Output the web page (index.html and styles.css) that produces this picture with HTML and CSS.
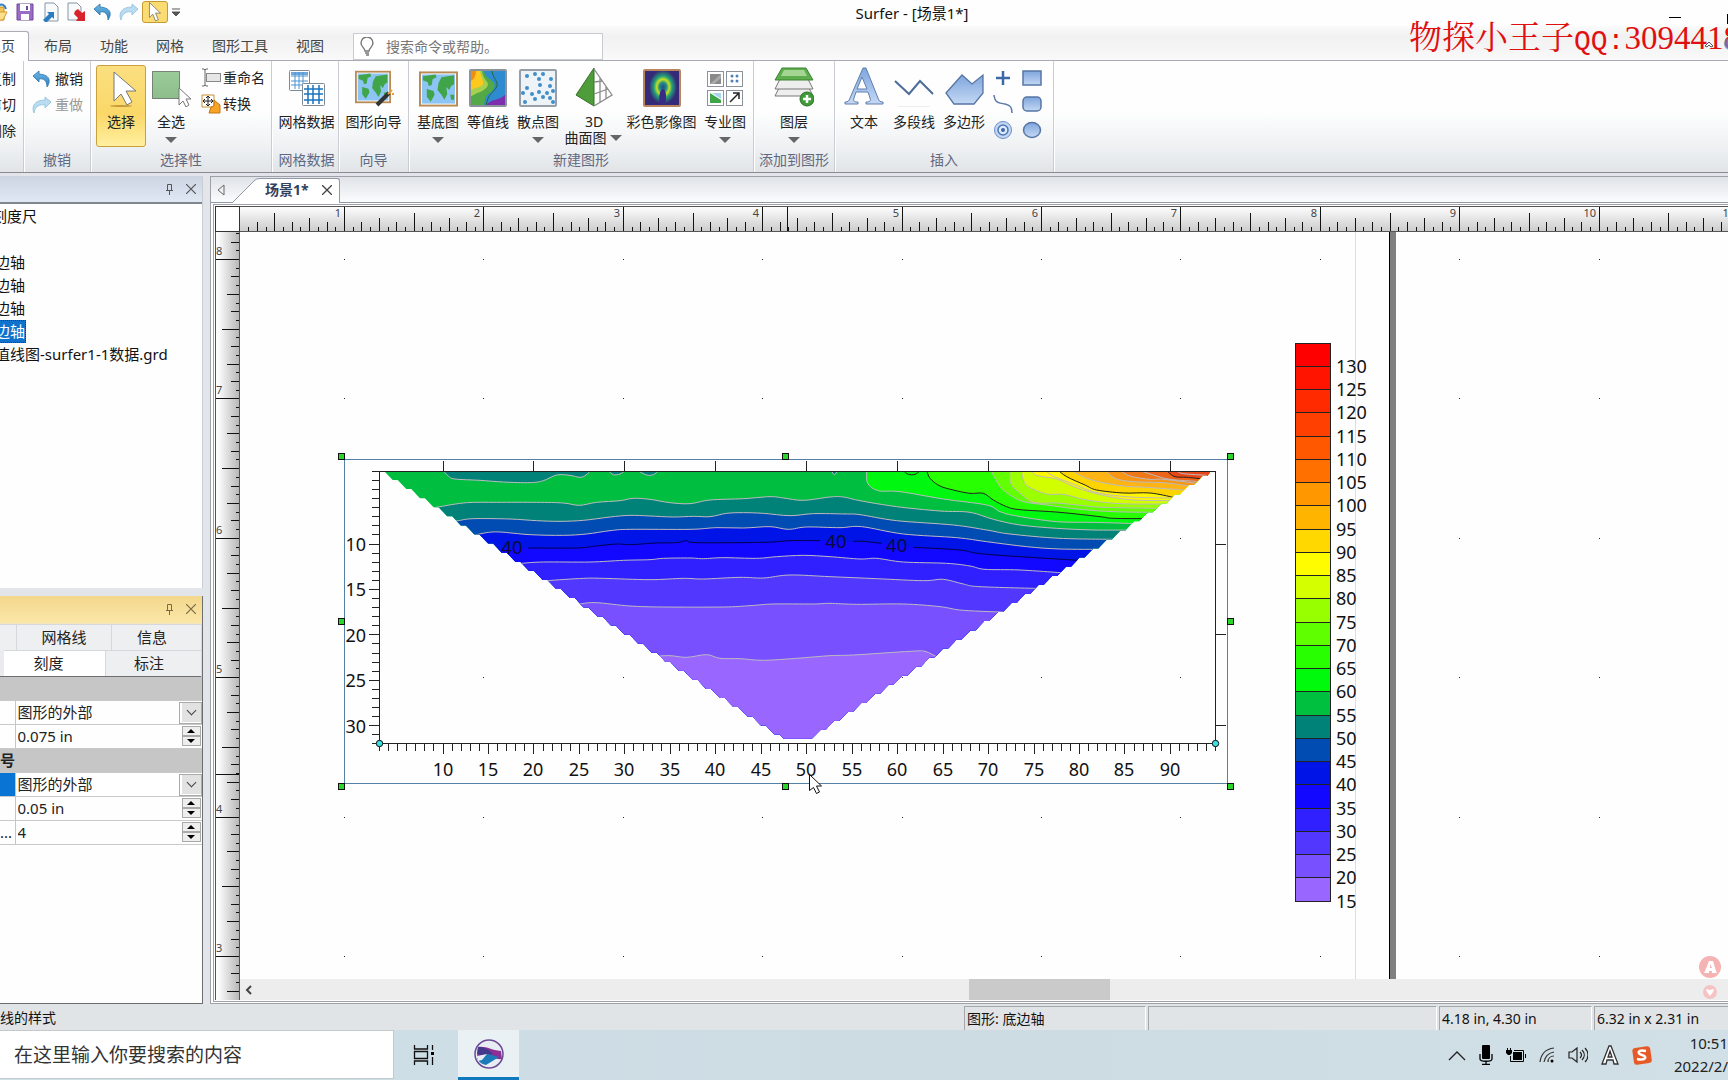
FILE: index.html
```html
<!DOCTYPE html>
<html lang="zh-CN">
<head>
<meta charset="utf-8">
<title>Surfer - [场景1*]</title>
<link rel="stylesheet" href="styles.css">
</head>
<body>
<svg class="defs" aria-hidden="true">
  <defs>
    <linearGradient id="gBlue" x1="0" y1="0" x2="0" y2="1"><stop offset="0" stop-color="#7fa6dd"/><stop offset="1" stop-color="#c4d8f4"/></linearGradient>
    <linearGradient id="gGreen" x1="0" y1="0" x2="0" y2="1"><stop offset="0" stop-color="#9ccb9a"/><stop offset="1" stop-color="#8dbd8b"/></linearGradient>
    <linearGradient id="gUndo" x1="0" y1="0" x2="0" y2="1"><stop offset="0" stop-color="#6db8e6"/><stop offset="1" stop-color="#2d7fbd"/></linearGradient>
    <symbol id="undo" viewBox="0 0 20 18"><path d="M7 1 1 6l6 6V9c5-1 8 2 8 8 3-4 5-12-8-13z" fill="url(#gUndo)" stroke="#2a72aa" stroke-width=".8"/></symbol>
    <symbol id="redo" viewBox="0 0 20 18"><path d="M13 1l6 5-6 6V9C8 8 3 10 2 17-1 10 3 4 13 4z" fill="#b9dcf1" stroke="#8dbfdc" stroke-width=".8"/></symbol>
    <symbol id="arrow" viewBox="0 0 24 36"><path d="M2 1v27l6-6 5 12 5-2-5-12h9z" fill="#fff" stroke="#777" stroke-width="1.5" stroke-linejoin="round"/></symbol>
    <symbol id="world" viewBox="0 0 40 36"><rect x="1" y="1" width="38" height="34" fill="#fff" stroke="#b98a52" stroke-width="2"/><rect x="3" y="3" width="34" height="30" fill="#8cc4f4"/><path d="M4 5l13-2 1 3-4 2-1 6-3 1-1-4-5-2zM8 18l7 2 1 4-4 7-4-5zM20 12l3-6 13-2v9l-3 2-2 4-3-3 1 7-3 6-3-5-4-5zM32 24h4v5h-3z" fill="#3fa548"/></symbol>
  </defs>
</svg>

<header class="titlebar">
  <div class="quick">
    <button class="qbtn half" aria-label="打开"><svg width="18" height="20"><path d="M0 5h14v13H0z" fill="#f5c558" stroke="#c98f23"/><path d="M8 4c4-3 7-1 8 3" fill="none" stroke="#2b83c6" stroke-width="2"/><path d="M0 18l4-8h13l-4 8z" fill="#ffe08a" stroke="#d49a2c"/></svg></button>
    <button class="qbtn" aria-label="保存"><svg width="18" height="18"><path d="M1 1h16v16H1z" fill="#9b6cc4" stroke="#6d4a96"/><path d="M4 1h10v7H4zM5 11h8v6H5z" fill="#fff"/><path d="M10 3h2v4h-2z" fill="#6d4a96"/></svg></button>
    <button class="qbtn" aria-label="导入"><svg width="18" height="20"><path d="M3 1h9l4 4v14H3z" fill="#f8fafc" stroke="#8595a5"/><path d="M1 18l6-6-2-2h7v7l-2-2-6 6z" fill="#2b7cc0"/></svg></button>
    <button class="qbtn" aria-label="导出"><svg width="20" height="20"><path d="M1 1h9l4 4v13H1z" fill="#f8fafc" stroke="#8595a5"/><path d="M8 9l3-2 4 4 3-2v10H9l2-3-4-4z" fill="#d8232a"/></svg></button>
    <button class="qbtn" aria-label="撤销"><svg width="20" height="18"><use href="#undo"/></svg></button>
    <button class="qbtn" aria-label="重做"><svg width="20" height="18"><use href="#redo"/></svg></button>
    <button class="qbtn on" aria-label="选择"><svg width="14" height="20"><use href="#arrow"/></svg></button>
    <button class="qmore" aria-label="自定义"><svg width="9" height="9"><path d="M0 1h8M0 4h8L4 8z" fill="#555" stroke="#555"/></svg></button>
  </div>
  <h1 class="title">Surfer - [场景1*]</h1>
</header>

<nav class="tabs">
  <a href="#home" class="tab current">主页</a>
  <a href="#layout" class="tab">布局</a>
  <a href="#features" class="tab">功能</a>
  <a href="#grids" class="tab">网格</a>
  <a href="#maptools" class="tab">图形工具</a>
  <a href="#view" class="tab">视图</a>
  <label class="finder">
    <svg width="14" height="20"><path d="M5 14c0-3-4-4-4-8a6 6 0 0 1 12 0c0 4-4 5-4 8zM5 16h4M6 18h3" fill="none" stroke="#777" stroke-width="1.4"/></svg>
    <input type="text" placeholder="搜索命令或帮助。" aria-label="搜索命令或帮助">
  </label>
</nav>
<div class="watermark">物探小王子<span class="mono">QQ:</span>3094418</div>
<div class="winbtns">
  <svg width="60" height="50"><path d="M1 9.500h12" stroke="#000"/><path d="M59.500 6v10" stroke="#000"/><path d="M37 38l4-4 4 4-2 1-2-2-2 2z" fill="#fff" stroke="#555"/><circle cx="62" cy="36" r="6" fill="#5f86d8" opacity=".7"/></svg>
</div>

<section class="ribbon">
  <div class="group g-clip">
    <div class="items stack end"><button class="sbtn">复制</button><button class="sbtn">剪切</button><button class="sbtn">删除</button></div>
  </div>
  <div class="group g-undo">
    <div class="items stack"><button class="sbtn"><svg width="20" height="18"><use href="#undo"/></svg>撤销</button><button class="sbtn off"><svg width="20" height="18"><use href="#redo"/></svg>重做</button></div>
    <div class="cap">撤销</div>
  </div>
  <div class="group g-sel">
    <div class="items">
      <button class="btn on w50"><svg width="40" height="40"><ellipse cx="20" cy="39" rx="11" ry="1" fill="#c79b3c"/><path d="M13 5v29l7-7 6 11 5-3-6-11h10z" fill="#fff" stroke="#777" stroke-linejoin="round"/></svg><span>选择</span></button>
      <button class="btn w50"><svg width="40" height="40"><rect x="1.500" y="4.500" width="27" height="27" fill="url(#gGreen)" stroke="#222" stroke-dasharray="1 1"/><path d="M28 21v17l4-4 3 6 3-2-3-6h5z" fill="#fff" stroke="#777"/></svg><span>全选</span><i class="dd"></i></button>
      <div class="stack gap"><button class="sbtn"><svg width="20" height="20"><path d="M1 1h2l1 1 1-1h2M4 2v15M1 18h2l1-1 1 1h2" fill="none" stroke="#666"/><rect x="5.500" y="5.500" width="14" height="8" fill="#e6e6e6" stroke="#888"/></svg>重命名</button><button class="sbtn"><svg width="20" height="20"><path d="M1 1h12v12H1z" fill="#fff" stroke="#c78f2c"/><path d="M7 2v10M2 7h10M5 4l2-2 2 2M5 10l2 2 2-2M4 5L2 7l2 2M10 5l2 2-2 2" fill="none" stroke="#222"/><path d="M10 13l3-1V6l6 5v8H8z" fill="#f7a325" stroke="#c87412"/></svg>转换</button></div>
    </div>
    <div class="cap">选择性</div>
  </div>
  <div class="group g-grid">
    <div class="items"><button class="btn fill"><svg width="40" height="40"><rect x="2.500" y="3.500" width="20" height="20" rx="1" fill="#fff" stroke="#7c8894"/><path d="M4 5h17v3H4z" fill="#6fa8dc"/><path d="M8 5v17M12 5v17M16 5v17M4 9h17M4 14h17M4 18h17" stroke="#4f94d0"/><rect x="15.500" y="16.500" width="22" height="22" rx="1" fill="#fff" stroke="#7c8894"/><path d="M21 18v19M26 18v19M32 18v19M17 22h19M17 27h19M17 33h19" stroke="#1b74bd" stroke-width="1.500"/></svg><span>网格数据</span></button></div>
    <div class="cap">网格数据</div>
  </div>
  <div class="group g-wiz">
    <div class="items"><button class="btn fill"><svg width="40" height="40"><use href="#world" x="1" y="3" width="36" height="34"/><path d="M23 38l12-12" stroke="#333" stroke-width="4"/><path d="M34 27l4-4M36 22v3M38 27h2" stroke="#e0a040" stroke-width="2"/></svg><span>图形向导</span></button></div>
    <div class="cap">向导</div>
  </div>
  <div class="group g-new">
    <div class="items">
      <button class="btn w50"><svg width="40" height="40"><use href="#world" x="1" y="4" width="39" height="36"/></svg><span>基底图</span><i class="dd"></i></button>
      <button class="btn w50"><svg width="40" height="40"><rect x="2" y="3" width="36" height="36" fill="#2e8bd0"/><path d="M2 39V3h14c0 10 14 10 10 18s-8 2-10 18z" fill="#52a946"/><path d="M2 26V3h12c0 10 9 12 5 17S12 24 2 30z" fill="#a4cf4f"/><path d="M2 22V3h10c0 6 4 10 3 14S6 20 2 24z" fill="#fdc91c"/><path d="M2 14V3h6c0 6-2 10-6 11z" fill="#f28d14"/><path d="M18 39c4-8 12-4 20-12v12z" fill="#7b2fae"/><path d="M24 3c0 8 8 12 4 18s-8 6-10 18" fill="none" stroke="#216a3c"/><rect x="2" y="3" width="36" height="36" rx="1" fill="none" stroke="#8c929c" stroke-width="2"/></svg><span>等值线</span></button>
      <button class="btn w50"><svg width="40" height="40"><rect x="2" y="3" width="36" height="36" rx="1" fill="#eef3f8" stroke="#989fa9" stroke-width="2"/><g fill="#3f8fc9"><circle cx="9" cy="9" r="2"/><circle cx="17" cy="7" r="2"/><circle cx="25" cy="7" r="2"/><circle cx="21" cy="12" r="2"/><circle cx="33" cy="12" r="2"/><circle cx="22" cy="18" r="2"/><circle cx="9" cy="21" r="2"/><circle cx="32" cy="19" r="2"/><circle cx="5" cy="26" r="2"/><circle cx="14" cy="27" r="2"/><circle cx="21" cy="25" r="2"/><circle cx="29" cy="26" r="2"/><circle cx="35" cy="24" r="2"/><circle cx="25" cy="30" r="2"/><circle cx="17" cy="32" r="2"/><circle cx="7" cy="35" r="2"/><circle cx="32" cy="31" r="2"/><circle cx="35" cy="35" r="2"/></g></svg><span>散点图</span><i class="dd"></i></button>
      <button class="btn w62"><svg width="40" height="40"><path d="M20 1v38L2 28z" fill="#4f9c3a" stroke="#33702a"/><path d="M20 2l18 26-18 11M26 36V11M32 32V19M20 15l8-1M20 27l14-5" fill="none" stroke="#8a8a8a" stroke-width="1.300"/></svg><span>3D</span><span class="two">曲面图<i class="dd"></i></span></button>
      <button class="btn w73"><svg width="40" height="40"><defs><radialGradient id="heat"><stop offset="0" stop-color="#274b83"/><stop offset=".25" stop-color="#1c8a8c"/><stop offset=".45" stop-color="#c8e020"/><stop offset=".65" stop-color="#22a07a"/><stop offset="1" stop-color="#352a78"/></radialGradient></defs><rect x="2" y="3" width="36" height="36" fill="#352a78"/><ellipse cx="21" cy="20" rx="14" ry="17" fill="url(#heat)"/><path d="M18 38c-2-8 0-16 3-16s4 8 2 16z" fill="#3a2a86"/><rect x="2" y="3" width="36" height="36" rx="1" fill="none" stroke="#b98560" stroke-width="2"/></svg><span>彩色影像图</span></button>
      <button class="btn w54"><svg width="40" height="40"><g fill="#fff" stroke="#8d929a"><rect x="2.500" y="4.500" width="16" height="15"/><rect x="21.500" y="4.500" width="16" height="15"/><rect x="2.500" y="23.500" width="16" height="15"/><rect x="21.500" y="23.500" width="16" height="15"/></g><path d="M5 7h11v10H5z" fill="#8a8a8a"/><path d="M5 17l11-10v4L9 17z" fill="#aaa"/><g fill="#4f7fb8"><circle cx="27" cy="9" r="1.500"/><circle cx="32" cy="9" r="1.500"/><circle cx="27" cy="14" r="1.500"/><circle cx="32" cy="14" r="1.500"/></g><path d="M5 26l11 7v3H5z" fill="#3fa548"/><path d="M7 26h9v6z" fill="#a8d4f0"/><path d="M25 35l8-8m-5-1h6v6" fill="none" stroke="#222" stroke-width="1.500"/></svg><span>专业图</span><i class="dd"></i></button>
    </div>
    <div class="cap">新建图形</div>
  </div>
  <div class="group g-layer">
    <div class="items"><button class="btn fill"><svg width="40" height="40"><g stroke="#777" fill="#eee"><path d="M6 19h28l5 10H1z"/><path d="M6 12h28l5 10H1z"/></g><path d="M8 1h24l7 12H1z" fill="#5fae4e" stroke="#3a8331"/><path d="M10 3h20l3 6H7z" fill="#a5d593"/><circle cx="33" cy="32" r="7" fill="#3f9a38" stroke="#2b7226"/><path d="M33 28v8M29 32h8" stroke="#fff" stroke-width="2.500"/></svg><span>图层</span><i class="dd"></i></button></div>
    <div class="cap">添加到图形</div>
  </div>
  <div class="group g-ins">
    <div class="items">
      <button class="btn w50"><svg width="40" height="40"><path d="M1 37v-2c3 0 4-1 5-4L19 1h3l12 30c1 3 2 4 5 4v2H22v-2c4 0 5-1 4-4l-2-6H12l-2 6c-1 3 0 4 4 4v2zM13 22h10L18 10z" fill="url(#gBlue)" stroke="#5f7fae" fill-rule="evenodd"/></svg><span>文本</span></button>
      <button class="btn w50"><svg width="40" height="40"><path d="M1 14l14 13 11-13 13 13" fill="none" stroke="#4c6c98" stroke-width="2"/><path d="M4 40h32" stroke="#ddd"/></svg><span>多段线</span></button>
      <button class="btn w50"><svg width="40" height="40"><path d="M2 26L18 8l10 9L39 8v18L30 37H10z" fill="url(#gBlue)" stroke="#5676a5" stroke-width="1.300"/></svg><span>多边形</span></button>
      <div class="shapes">
        <button aria-label="点"><svg width="20" height="20"><path d="M10 3v14M3 10h14" stroke="#3c69a8" stroke-width="2.500"/></svg></button>
        <button aria-label="矩形"><svg width="20" height="20"><rect x="1" y="3" width="18" height="14" fill="url(#gBlue)" stroke="#5676a5" stroke-width="1.500"/></svg></button>
        <button aria-label="样条"><svg width="20" height="20"><path d="M1 1c1 9 6 8 11 9s7 3 7 9" fill="none" stroke="#5a7aa6" stroke-width="1.500"/></svg></button>
        <button aria-label="圆角矩形"><svg width="20" height="20"><rect x="1" y="3" width="18" height="14" rx="4" fill="url(#gBlue)" stroke="#5676a5" stroke-width="1.500"/></svg></button>
        <button aria-label="圆环"><svg width="20" height="20"><circle cx="10" cy="10" r="8.500" fill="#c4d8f4" stroke="#6d8fc4"/><circle cx="10" cy="10" r="5" fill="#dfeafa" stroke="#4c77b8" stroke-width="1.500"/><circle cx="10" cy="10" r="2" fill="#3c69a8"/></svg></button>
        <button aria-label="椭圆"><svg width="20" height="20"><ellipse cx="10" cy="10" rx="8.500" ry="7.500" fill="url(#gBlue)" stroke="#5676a5" stroke-width="1.500"/></svg></button>
      </div>
    </div>
    <div class="cap">插入</div>
  </div>
</section>

<main class="work">
  <aside class="side">
    <section class="panel tree-panel">
      <div class="phead"><button aria-label="固定"><svg width="9" height="11"><path d="M1 6.500h7M2.500 6V.5h4V6M4.500 7v4" fill="none" stroke="#555"/></svg></button><button aria-label="关闭"><svg width="10" height="10"><path d="M0 0l10 10M10 0L0 10" stroke="#555" stroke-width="1.200"/></svg></button></div>
      <ul class="tree">
        <li class="root">刻度尺</li>
        <li></li>
        <li>边轴</li>
        <li>边轴</li>
        <li>边轴</li>
        <li><span class="picked">边轴</span></li>
        <li>值线图-surfer1-1数据.grd</li>
      </ul>
    </section>
    <section class="panel prop-panel">
      <div class="phead gold"><button aria-label="固定"><svg width="9" height="11"><path d="M1 6.500h7M2.500 6V.5h4V6M4.500 7v4" fill="none" stroke="#7a6a48"/></svg></button><button aria-label="关闭"><svg width="10" height="10"><path d="M0 0l10 10M10 0L0 10" stroke="#7a6a48" stroke-width="1.200"/></svg></button></div>
      <div class="ptabs one"><button aria-label="常规"></button><button>网格线</button><button>信息</button></div>
      <div class="ptabs two"><button class="current">刻度</button><button>标注</button></div>
      <table class="props">
        <colgroup><col class="c-name"><col></colgroup>
        <tbody>
          <tr class="sec"><th colspan="2"></th></tr>
          <tr><th></th><td><select aria-label="主刻度样式"><option>图形的外部</option></select></td></tr>
          <tr><th></th><td><div class="spin"><input type="text" value="0.075 in" aria-label="主刻度长度"><span class="ud"><button aria-label="增加"><i class="up"></i></button><button aria-label="减少"><i class="dn"></i></button></span></div></td></tr>
          <tr class="sec"><th colspan="2">号</th></tr>
          <tr class="sel"><th></th><td><select aria-label="次刻度样式"><option>图形的外部</option></select></td></tr>
          <tr><th></th><td><div class="spin"><input type="text" value="0.05 in" aria-label="次刻度长度"><span class="ud"><button aria-label="增加"><i class="up"></i></button><button aria-label="减少"><i class="dn"></i></button></span></div></td></tr>
          <tr><th>...</th><td><div class="spin"><input type="text" value="4" aria-label="次刻度数量"><span class="ud"><button aria-label="增加"><i class="up"></i></button><button aria-label="减少"><i class="dn"></i></button></span></div></td></tr>
        </tbody>
      </table>
    </section>
  </aside>

  <section class="doc">
    <div class="doctabs">
      <button class="prev" aria-label="上一个"><svg width="8" height="12"><path d="M7 1v10L1 6z" fill="none" stroke="#666"/></svg></button>
      <div class="doctab">
        <svg class="slope" width="28" height="25"><path d="M0 25L22 3Q24 .5 28 .5V25z" fill="#fff"/><path d="M0 25L22 3Q24 .5 28 .5" fill="none" stroke="#9299a5"/></svg>
        <div class="tabbody"><a href="#scene1">场景1*</a><button aria-label="关闭"><svg width="10" height="10"><path d="M0 0l10 10M10 0L0 10" stroke="#444" stroke-width="1.300"/></svg></button></div>
      </div>
    </div>
    <div class="frame">
      <div class="corner"></div>
      <svg class="hruler" id="hruler"></svg>
      <svg class="vruler" id="vruler"></svg>
      <svg class="canvas" id="canvas"></svg>
      <div class="hscroll"><svg width="8" height="10"><path d="M6 1L2 5l4 4" fill="none" stroke="#444" stroke-width="2"/></svg><div class="thumb"></div></div>
      <svg class="badge" width="24" height="46"><circle cx="12" cy="12" r="11" fill="#f6b3b3"/><path d="M6 18l1-2 4-10h4l3 10 1 2h-5v-2h-3v2zM12 9v4h2z" fill="#fff" fill-rule="evenodd"/><circle cx="12" cy="37" r="7" fill="#f6c3c3"/><path d="M8 34l4 1 4-1-1 3-3 4-3-4z" fill="#fff"/></svg>
    </div>
  </section>
</main>

<footer class="status">
  <span class="hint">线的样式</span><span class="cell">图形: 底边轴</span><span class="cell"></span><span class="cell">4.18 in, 4.30 in</span><span class="cell last">6.32 in x 2.31 in</span>
</footer>

<div class="taskbar">
  <input class="tsearch" type="text" placeholder="在这里输入你要搜索的内容" aria-label="搜索">
  <button class="tview" aria-label="任务视图"><svg width="22" height="22"><path d="M1.500 1v4h13V1M1.500 7.500h13v7h-13zM1.500 21v-4h13v4M19.500 1v5M19.500 13v8" fill="none" stroke="#111" stroke-width="1.300"/><path d="M18 8h3v3h-3z"/></svg></button>
  <button class="tapp" aria-label="Surfer"><svg width="32" height="32"><circle cx="16" cy="16" r="14" fill="#e8edf3" stroke="#6c4a94" stroke-width="1.500"/><path d="M5 9c9-1 12 3 23 4l1 8c-6 1-10-3-15-3L4 19z" fill="#8c2f96"/><path d="M5 9c7 0 10 2 15 7l-9 2-7-2z" fill="#443a8c"/><path d="M4 20l11-4 11 3-13 8c-5-1-8-4-9-7z" fill="#1b7ab8"/><path d="M4 18l10-2-5 6-4 1z" fill="#e8edf3"/></svg></button>
  <div class="tray">
    <svg width="18" height="12"><path d="M1 11l8-8 8 8" fill="none" stroke="#222" stroke-width="1.300"/></svg>
    <svg width="14" height="20"><rect x="3" y="0" width="8" height="14" rx="1"/><path d="M1 9v5c0 3 12 3 12 0V9M7 16v3M3 19.500h8" fill="none" stroke="#000" stroke-width="1.300"/></svg>
    <svg width="20" height="16"><path d="M7 5h9v8H7z"/><path d="M8 3.500h9.500v11h-13V9M19.500 7v4M1.500 1v2M4.500 1v2" stroke="#000" fill="none"/><path d="M0 3h6v3L4 8H2L0 6z"/></svg>
    <svg width="16" height="16"><path d="M1 15C2 7 7 2 15 1M5 15c1-5 4-9 10-10M9 15c0-3 2-6 6-6" fill="none" stroke="#333" stroke-width="1.200"/><circle cx="13" cy="14" r="1.500"/></svg>
    <svg width="20" height="18"><path d="M1 6h3l5-4v14l-5-4H1zM12 6c2 2 2 4 0 6M14 4c3 3 3 7 0 10M17 2c4 4 4 10 0 14" fill="none" stroke="#222" stroke-width="1.200"/></svg>
    <svg width="18" height="20"><path d="M1 19L8 1h2l7 18h-4l-1-4H6l-1 4zM7 12h4L9 6z" fill="#fff" stroke="#333" stroke-width="1.300"/></svg>
    <svg width="20" height="20"><rect x="1" y="2" width="18" height="17" rx="3" fill="#e65a28" transform="rotate(-8 10 10)"/><path d="M14 6c-9-2-9 3-4 4s5 6-5 4" fill="none" stroke="#fff" stroke-width="2.500"/></svg>
  </div>
  <div class="clock"><span>10:51</span><span>2022/2/</span></div>
</div>
<script src="app.js"></script>
</body>
</html>
```
FILE: styles.css
```css
* { box-sizing: border-box; }
body {
  margin: 0;
  height: 100vh;
  display: flex;
  flex-direction: column;
  overflow: hidden;
  position: relative;
  background: #e2e5e9;
  color: #222;
  font: 14px/18px "Noto Sans", "Noto Sans CJK SC", sans-serif;
}
button, input, select {
  font: inherit;
  color: inherit;
  background: none;
  border: 0;
  padding: 0;
  margin: 0;
  border-radius: 0;
}
a { color: inherit; text-decoration: none; }
svg { display: block; flex: none; }
.defs { position: absolute; width: 0; height: 0; }

/* title bar */
.titlebar {
  height: 26px;
  flex: none;
  display: grid;
  grid-template-columns: 1fr auto 1fr;
  align-items: start;
  background: #fefefe;
}
.titlebar .title {
  grid-column: 2;
  margin: 0 0 0 96px;
  font-size: 15px;
  font-weight: 400;
  line-height: 26px;
  color: #111;
}
.quick { display: flex; align-items: center; height: 24px; }
.qbtn { width: 26px; height: 22px; display: flex; align-items: center; justify-content: center; flex: none; }
.qbtn.half { width: 12px; justify-content: flex-end; overflow: hidden; padding-right: 4px; }
.qbtn.on { border: 1px solid #c29b34; border-radius: 3px; background: #fbdc73; }
.qmore { padding-left: 4px; }

/* ribbon tabs */
.tabs {
  height: 35px;
  flex: none;
  display: flex;
  align-items: flex-end;
  background: linear-gradient(#fbfbfb, #f1f1f1 30%, #f9f9f9);
  border-bottom: 1px solid #a9adb3;
}
.tab { padding: 0 14px; line-height: 30px; height: 29px; color: #444; white-space: nowrap; }
.tab.current {
  width: 29px;
  margin: 0 1px -1px 0;
  height: 30px;
  padding: 0 13px 0 0;
  display: flex;
  justify-content: flex-end;
  line-height: 28px;
  background: #fff;
  border: 1px solid #a9adb3;
  border-width: 1px 1px 0 0;
  border-radius: 0 3px 0 0;
}
.finder {
  width: 250px;
  height: 27px;
  margin-left: 15px;
  padding: 0 6px;
  display: flex;
  align-items: center;
  gap: 12px;
  background: #fff;
  border: 1px solid #c9cbd0;
}
.finder input { width: 180px; }
input::placeholder { color: #777; opacity: 1; }
.watermark {
  position: absolute;
  left: 1409px;
  top: 18px;
  white-space: nowrap;
  color: #e01010;
  font: 33px/40px "Liberation Serif", "Noto Serif CJK SC", "Noto Sans CJK SC", serif;
}
.watermark .mono { font-family: "Liberation Mono", monospace; font-size: 28px; }
.winbtns { position: absolute; right: 0; top: 8px; }

/* ribbon */
.ribbon {
  height: 112px;
  flex: none;
  display: flex;
  background: linear-gradient(#fefefe 45%, #eceff1 82%, #e2e4e8);
  border-bottom: 1px solid #868a90;
}
.group {
  flex: none;
  display: flex;
  flex-direction: column;
  justify-content: space-between;
  padding: 4px 4px 2px;
  border-right: 1px solid #c9cdd3;
  box-shadow: 1px 0 #fff;
}
.items { display: flex; height: 82px; }
.cap { text-align: center; line-height: 20px; color: #5f6982; white-space: nowrap; }
.g-clip { width: 24px; padding-right: 7px; padding-left: 0; }
.g-undo { width: 67px; }
.g-sel { width: 181px; }
.g-grid { width: 67px; }
.g-wiz { width: 70px; }
.g-new { width: 345px; }
.g-layer { width: 81px; }
.g-ins { width: 219px; }
.g-wiz, .g-layer { padding-left: 0; padding-right: 0; }
.g-grid { padding-left: 3px; padding-right: 0; }
.btn {
  display: flex;
  flex-direction: column;
  align-items: center;
  padding-top: 2px;
  white-space: nowrap;
  line-height: 17px;
  color: #222;
  flex: none;
}
.btn span { margin-top: 6px; }
.btn .two { margin-top: -1px; display: flex; gap: 3px; align-items: center; padding-right: 2px; }
.btn .two .dd { margin: 0; }
.btn.fill { width: 100%; }
.w50 { width: 50px; }
.w54 { width: 54px; }
.w62 { width: 62px; }
.w73 { width: 73px; }
.g-sel .items { padding-left: 1px; }
.btn.on { border: 1px solid #c9a13c; border-radius: 3px; padding-top: 1px; background: linear-gradient(#fbdf80, #fad768 60%, #fff0a0); }
.dd { margin-top: 7px; border: 6px solid transparent; border-top: 6px solid #666; border-bottom: 0; }
.stack { display: flex; flex-direction: column; }
.stack.end { align-items: flex-end; }
.stack .sbtn { height: 26px; }
.stack.gap { margin-left: 5px; }
.items.stack { padding: 1px 0; }
.sbtn { display: flex; align-items: center; gap: 3px; white-space: nowrap; color: #222; flex: none; }
.stack.gap .sbtn { gap: 2px; }
.g-undo .sbtn { padding-left: 4px; }
.sbtn.off { color: #999; }
.shapes { display: grid; grid-template-columns: 20px 20px; gap: 6px 9px; padding: 3px 0 0 4px; align-content: start; }

/* work area */
.work { flex: 1; min-height: 0; display: flex; padding-top: 3px; gap: 7px; }
.side { width: 203px; flex: none; display: flex; flex-direction: column; gap: 8px; overflow: hidden; }
.tree-panel { flex: 412; min-height: 0; background: #fefefe; display: flex; flex-direction: column; border-right: 1px solid #c9ccd1; }
.prop-panel { flex: 408; min-height: 0; background: #fefefe; display: flex; flex-direction: column; border-right: 1px solid #6c6e72; border-bottom: 1px solid #6c6e72; }
.phead {
  height: 28px;
  flex: none;
  display: flex;
  align-items: center;
  justify-content: flex-end;
  gap: 12px;
  padding-right: 6px;
  background: linear-gradient(#ccd4e2, #dfe8f3);
  border-bottom: 2px solid #81868e;
}
.phead.gold { background: linear-gradient(#f3d78d, #fce7a8); border-bottom: 1px solid #f3e6bc; }
.tree { list-style: none; margin: 0; padding: 1px 0 0; font-size: 15px; line-height: 23px; color: #111; }
.tree li { height: 23px; margin-left: -5px; white-space: nowrap; }
.tree .root { margin-left: -8px; }
.picked { display: inline-block; background: #0f72cc; color: #fff; padding-right: 1px; outline: 1px dotted #333; outline-offset: -1px; }
.ptabs { display: grid; flex: none; background: #e9ebee; font-size: 15px; height: 26px; color: #222; }
.ptabs button { border: 1px solid #d6d8db; border-left: 0; border-bottom: 0; background: #eeeff0; }
.ptabs.one { grid-template-columns: 17px 95px 1fr; }
.ptabs.two { grid-template-columns: 102px 1fr; padding-left: 4px; }
.ptabs button:last-child { padding-right: 9px; }
.ptabs .current { background: #fff; padding-right: 12px; }
.props { width: 100%; border-collapse: collapse; table-layout: fixed; font-size: 15px; border-top: 1px solid #6c6e72; color: #222; }
.c-name { width: 15px; }
.props tr { height: 24px; }
.props th { padding: 0; overflow: hidden; border-right: 1px solid #c5c5c5; border-bottom: 1px solid #c9c9c9; text-align: left; line-height: 22px; font-weight: 400; }
.props .sec th { background: #c6c6c6; font-weight: 700; }
.props td { position: relative; padding: 0 0 0 2px; border-bottom: 1px solid #c9c9c9; }
.props .sel th { background: #0a74d4; }
.props select { display: block; width: 100%; height: 22px; appearance: none; background: linear-gradient(#e2e2e2, #e2e2e2) no-repeat right center / 20px 20px; }
.props td:has(select)::after {
  content: "";
  position: absolute;
  right: 7px;
  top: 6px;
  width: 6px;
  height: 6px;
  border: 1px solid #444;
  border-width: 0 1px 1px 0;
  transform: rotate(45deg);
}
.props td:has(select)::before { content: ""; position: absolute; right: 0; top: 1px; width: 21px; height: 20px; border: 1px solid #aaa; }
.props .sel select { background: linear-gradient(#e2e2e2, #e2e2e2) no-repeat right center / 20px 20px; width: 100%; }
.props .sel td { background: conic-gradient(#fff 0 0) no-repeat; }
.spin { display: flex; height: 22px; padding-right: 1px; }
.spin input { flex: 1; min-width: 0; }
.ud { display: grid; width: 19px; padding: 1px 0; }
.ud button { display: flex; align-items: center; justify-content: center; border: 1px solid #aaa; background: #eee; }
.up, .dn { border: 4px solid transparent; }
.up { border-top: 0; border-bottom-color: #000; }
.dn { border-bottom: 0; border-top-color: #000; }

/* document */
.doc { flex: 1; min-width: 0; display: flex; flex-direction: column; border: 1px solid #9ea2a8; border-right: 0; background: #fff; }
.doctabs { height: 26px; flex: none; display: flex; align-items: flex-end; background: linear-gradient(#dfe3e8, #fbfcfd); border-bottom: 1px solid #9299a5; }
.prev { padding: 0 0 6px 6px; width: 21px; }
.doctab { display: flex; margin-bottom: -1px; }
.tabbody { width: 80px; height: 25px; display: flex; align-items: center; gap: 13px; padding: 0 0 2px 5px; background: #fff; border: 1px solid #9299a5; border-width: 1px 1px 0 0; border-radius: 0 3px 0 0; }
.tabbody a { font-weight: 700; color: #33415c; white-space: nowrap; }
.frame {
  position: relative;
  flex: 1;
  min-height: 0;
  margin: 1px 0 1px 2px;
  padding: 1px 0 1px 1px;
  display: grid;
  grid-template: 26px minmax(0, 1fr) 21px / 25px minmax(0, 1fr);
  border: 1px solid #9ea2a8;
  border-right: 0;
}
.corner { border: 1px solid #333; background: #fff; }
.hruler { width: 100%; height: 100%; background: linear-gradient(#fdfdfd, #ccc); border: 1px solid #555; border-width: 1px 0; }
.vruler { width: 100%; height: 100%; grid-row: 2 / 4; background: linear-gradient(90deg, #fdfdfd 10%, #b8b8b8); border: 1px solid #555; border-width: 0 1px; }
.canvas { width: 100%; height: 100%; background: #fefefe; }
.hscroll { display: flex; align-items: center; background: #ededed; padding-left: 5px; }
.thumb { width: 141px; height: 100%; background: #cacaca; margin-left: 48.3%; }
.badge { position: absolute; right: 6px; bottom: 0; }
svg text { font-family: "Noto Sans", sans-serif; }
.tick { font-size: 11px; fill: #444; }
.num { font-size: 18px; fill: #111; }

/* status bar */
.status {
  height: 26px;
  flex: none;
  display: grid;
  grid-template-columns: 1fr 182px 289px 153px 134px;
  column-gap: 2px;
  background: #e1e4e6;
  line-height: 28px;
  color: #111;
}
.cell { margin: 2px 0 1px; padding-left: 2px; border: 1px solid #a3a7ab; border-right-color: #fff; border-bottom-color: #fff; line-height: 23px; white-space: nowrap; }
.cell.last { border-right: 0; }

/* taskbar */
.taskbar { height: 50px; flex: none; display: flex; align-items: stretch; background: linear-gradient(90deg, #cfe0e8, #cddbe2 60%, #d1e0e7); }
.tsearch { width: 394px; height: 49px; padding-left: 14px; font-size: 19px; background: #fff; border: 1px solid #c4c9cc; border-left: 0; }
.tsearch::placeholder { color: #333; }
.tview { width: 64px; display: flex; align-items: center; justify-content: center; padding-right: 4px; }
.tapp { width: 61px; display: flex; align-items: center; justify-content: center; background: #e9f1f4; border-bottom: 3px solid #1078bd; }
.tray { margin-left: auto; display: flex; align-items: center; gap: 13px; padding-right: 22px; }
.clock { width: 54px; display: flex; flex-direction: column; justify-content: center; align-items: flex-end; font-size: 15px; line-height: 23px; color: #222; white-space: nowrap; }
```
FILE: app.js
```js
const NS = 'http://www.w3.org/2000/svg';

function add(parent, name, attrs, text) {
  const node = document.createElementNS(NS, name);
  for (const key in attrs) node.setAttribute(key, attrs[key]);
  if (text !== undefined) node.textContent = text;
  parent.appendChild(node);
  return node;
}

/* Rulers: one inch is 139.4 px, split into sixteenths. */
const INCH = 139.4;
const lengths = [24, 4, 9, 4, 13, 4, 9, 4, 18, 4, 9, 4, 13, 4, 9, 4];

const hr = document.getElementById('hruler');
const h = add(hr, 'g', { stroke: '#111', 'shape-rendering': 'crispEdges' });
for (let i = -12; i < 240; i++) {
  const x = Math.round(104 + i * INCH / 16);
  const len = lengths[((i % 16) + 16) % 16];
  if (x > 0) add(h, 'path', { d: `M${x}.5 24v-${len}` });
  if (i % 16 === 0 && i >= 0) add(hr, 'text', { class: 'tick', x: x - 3, y: 10, 'text-anchor': 'end' }, 1 + i / 16);
}
add(h, 'path', { d: 'M547.5 0v24' });

const vr = document.getElementById('vruler');
const v = add(vr, 'g', { stroke: '#111', 'shape-rendering': 'crispEdges' });
for (let i = -3; i < 110; i++) {
  const y = Math.round(27 + i * INCH / 16);
  const len = lengths[((i % 16) + 16) % 16];
  if (y > 0) add(v, 'path', { d: `M24 ${y}.5h-${len}` });
  if (i % 16 === 0 && i >= 0 && i < 96) add(vr, 'text', { class: 'tick', x: 0, y: y - 4 }, 8 - i / 16);
}
add(v, 'path', { d: 'M0 542.5h24' });

/* Page: everything below is in window coordinates. */
const page = add(document.getElementById('canvas'), 'g', { transform: 'translate(-240 -232)' });
add(page, 'path', { d: 'M1355.5 232V4000', stroke: '#ddd' });
add(page, 'rect', { x: 1390, y: 232, width: 6, height: 4000, fill: '#808080' });
add(page, 'rect', { x: 1389, y: 232, width: 1, height: 4000, fill: '#000' });
for (let r = 0; r < 6; r++) for (let c = 0; c < 12; c++) {
  add(page, 'rect', { x: Math.round(344 + c * INCH), y: Math.round(259 + r * INCH), width: 1, height: 1, fill: '#222' });
}

/* Contour map, drawn on a grid three times finer than the page. */
const map = add(page, 'svg', { x: 330, y: 440, width: 920, height: 360, viewBox: '0 0 2760 1080' });
let edge = 'M163 94';
for (let k = 0; k < 29; k++) edge += `L${188 + 40.9 * k} ${120 + 27.25 * k}h15`;
edge += 'L1361 896H1445';
for (let k = 28; k >= 0; k--) edge += `L${2617 - 40.9 * k} ${108 + 27.2 * k}h15`;
edge += 'L2642 94z';
const clip = add(add(map, 'defs', {}), 'clipPath', { id: 'survey' });
add(clip, 'path', { d: edge });
const body = add(map, 'g', { 'clip-path': 'url(#survey)' });
add(body, 'rect', { x: 0, y: 90, width: 2760, height: 820, fill: '#00bf40' });

function curve(p) {
  let d = `M${p[0]} ${p[1]}`;
  const n = p.length / 2;
  const at = i => [p[2 * Math.max(0, Math.min(n - 1, i))], p[2 * Math.max(0, Math.min(n - 1, i)) + 1]];
  for (let i = 0; i < n - 1; i++) {
    const [a, b, c, e] = [at(i - 1), at(i), at(i + 1), at(i + 2)];
    d += `C${b[0] + (c[0] - a[0]) / 6} ${b[1] + (c[1] - a[1]) / 6} ${c[0] - (e[0] - b[0]) / 6} ${c[1] - (e[1] - b[1]) / 6} ${c[0]} ${c[1]}`;
  }
  return d;
}
const LIGHT = '#bdbabf';
function band(points, fill, close, stroke = LIGHT) {
  const d = curve(points);
  if (fill) add(body, 'path', { d: d + close, fill });
  if (stroke) add(body, 'path', { d, fill: 'none', stroke, 'stroke-width': 3 });
}

function below(points, fill, stroke) {
  band(points, fill, `L2760 ${points[points.length - 1]}V920H0V${points[1]}z`, stroke);
}
below([300,206,330,200,410,188,500,187,620,187,700,189,748,196,800,187,870,182,910,175,960,178,1020,188,1080,191,1140,180,1240,176,1320,170,1360,174,1420,181,1500,171,1540,171,1590,182,1700,200,1830,213,1920,217,1990,238,2070,255,2180,265,2290,270,2400,270], '#008278');
below([360,246,385,242,430,236,540,237,620,242,690,244,760,241,840,231,900,226,960,228,1030,231,1090,229,1140,230,1190,220,1240,218,1300,220,1380,227,1450,221,1545,222,1590,224,1700,242,1870,255,1970,270,2040,282,2190,295,2360,298], '#004cb2');
below([420,290,432,286,470,278,510,276,600,284,700,286,770,282,840,272,900,268,1080,268,1160,263,1240,264,1320,260,1375,268,1430,261,1530,263,1595,260,1720,282,1880,293,1970,305,2090,320,2190,327,2320,328], '#0014e8');
below([400,330,520,326,595,324,740,324,800,318,860,312,900,314,980,309,1040,308,1070,302,1100,308,1300,307,1380,302,1470,302,1655,310,1750,322,1890,330,1970,343,2260,362], '#1208ff', null);
below([540,374,575,370,640,366,780,366,880,361,960,359,1000,355,1080,354,1120,356,1180,353,1280,355,1340,350,1420,346,1500,350,1590,357,1640,355,1720,366,1850,370,1920,378,1965,388,2070,390,2220,400], '#3020ff');
below([620,424,650,422,760,415,820,415,960,419,1060,415,1120,417,1230,412,1300,414,1380,405,1500,410,1640,416,1780,422,1840,418,1900,432,1950,440,2150,446], '#5238ff');
below([730,496,755,491,800,488,900,498,1000,501,1180,501,1260,497,1330,492,1450,492,1500,490,1580,493,1720,492,1830,500,1900,511,2040,517], '#7850ff');
below([970,649,1020,647,1070,652,1130,644,1170,655,1230,656,1300,661,1400,655,1500,647,1570,645,1740,634,1785,634,1820,650,1840,652], '#9966ff');

/* shallow pockets along the surface */
for (const p of [
  [338,90,355,108,375,117,450,121,520,126,600,128,640,122,680,105,720,106,750,112,768,105,784,90],
  [836,92,850,104,870,102,884,92],
  [923,92,950,105,970,104,986,92],
  [1504,92,1513,104,1523,92]
]) band(p, '#008278', 'z');

/* resistive zone at the right */
function above(points, fill, stroke) { band(points, fill, 'H2760V80H' + points[0] + 'z', stroke); }
above([1610,90,1613,130,1645,152,1710,155,1840,177,1970,195,2010,215,2060,228,2180,245,2290,247,2420,251], '#00f810');
above([1790,90,1800,115,1830,138,1870,150,1920,160,1960,160,1990,180,2030,200,2070,209,2190,217,2310,230,2350,235,2460,236], '#28ff00', '#222');
above([1982,90,2010,140,2040,165,2080,185,2150,195,2250,208,2350,215,2470,217], '#62ff00');
above([2040,90,2042,130,2065,155,2110,187,2180,189,2250,196,2320,202,2480,205], '#9aff00');
above([2074,90,2080,120,2095,140,2150,162,2200,163,2260,178,2330,188,2400,192,2500,192], '#d2ff00');
above([2103,90,2120,106,2180,117,2220,135,2270,153,2340,170,2410,180,2520,182], '#fff600');
above([2184,90,2210,110,2265,135,2300,150,2380,159,2460,159,2530,172], '#fdd400', '#222');
band([2145,90,2170,108,2240,136,2290,155,2350,166,2420,172,2520,174], null, '');
above([2225,90,2250,106,2300,124,2380,138,2450,142,2560,150], '#fdb414');
above([2326,90,2355,115,2410,125,2500,128,2580,138], '#f89614');
above([2370,90,2400,108,2460,118,2500,118,2600,130], '#f07818');
above([2425,90,2470,105,2520,118,2600,124], '#ee6418');
above([2508,90,2525,105,2540,111,2570,112,2620,117], '#e84818', '#222');
band([2540,92,2560,101,2630,106], null, '');
band([1720,92,1735,103,1755,103,1770,92], null, '', '#222');
const INDEX = '#00004a';
for (const p of [
  [595,324,740,324,800,318,860,312,900,314,980,309,1040,308,1070,302,1100,308,1300,307,1380,302,1470,302],
  [1570,304,1600,304,1655,310],
  [1750,322,1890,330,1970,343,2260,362]
]) band(p, null, '', INDEX);
for (const [x, y] of [[514, 343], [1486, 324], [1668, 337]]) {
  add(map, 'text', { x, y, 'font-size': 56, fill: '#0a0a40' }, '40');
}

/* axes */
const X = n => 379.4 + (n - 3) * 9.092;
const Y = n => 471.4 + (n - 2) * 9.083;
const px = n => Math.floor(n) + 0.5;
const axes = add(page, 'g', { stroke: '#222', fill: 'none', 'shape-rendering': 'crispEdges' });
add(axes, 'path', { d: 'M379.5 471.5H1215.5V743.5H379.5z' });
for (let n = 3; n <= 95; n++) {
  const major = n % 5 === 0 && n >= 10 && n < 95;
  add(axes, 'path', { d: `M${px(X(n))} 743v${major ? 11 : 8}` });
  if (n % 10 === 0) add(axes, 'path', { d: `M${px(X(n))} 471v-10` });
  if (major) add(page, 'text', { class: 'num', x: Math.floor(X(n)), y: 776, 'text-anchor': 'middle' }, n);
}
for (let n = 2; n <= 32; n++) {
  const major = n % 5 === 0 && n >= 10;
  add(axes, 'path', { d: `M379 ${px(Y(n))}h-${major ? 10 : 7}` });
  if (n % 10 === 0) add(axes, 'path', { d: `M1216 ${px(Y(n))}h10` });
  if (major) add(page, 'text', { class: 'num', x: 366, y: Math.round(Y(n)) + 7, 'text-anchor': 'end' }, n);
}

/* colour scale */
const scale = ['#ff0000', '#ff1400', '#ff2a00', '#ff4000', '#ff5800', '#ff7000', '#ff9800', '#ffb400', '#ffd800', '#fffc00', '#d4ff00', '#98ff00',
  '#60ff00', '#28ff00', '#00fa0c', '#00c040', '#008278', '#004cb2', '#0014e8', '#1208ff', '#3020ff', '#5238ff', '#7850ff', '#9966ff'];
scale.forEach((fill, i) => {
  const y = Math.round(342.6 + i * 23.25);
  const end = Math.round(342.6 + (i + 1) * 23.25);
  add(page, 'rect', { x: 1295.5, y: y + 0.5, width: 35, height: end - y, fill, stroke: '#222' });
  add(page, 'text', { class: 'num', x: 1336, y: end + 7 }, 130 - i * 5);
});

/* selection */
add(page, 'rect', { x: 344.5, y: 459.5, width: 883, height: 324, fill: 'none', stroke: '#5580a8' });
for (const x of [338, 782, 1227]) for (const y of [453, 618, 783]) {
  if (x === 782 && y === 618) continue;
  add(page, 'rect', { x: x + 0.5, y: y + 0.5, width: 6, height: 6, fill: '#2cd52c', stroke: '#111' });
}
for (const x of [379.5, 1215.5]) add(page, 'circle', { cx: x, cy: 743.5, r: 3.2, fill: '#3ce0e0', stroke: '#111' });
add(page, 'path', { d: 'M809.5 774.500v16l4-3 3 6 3-1.500-3-6h5z', fill: '#fff', stroke: '#111' });
```
